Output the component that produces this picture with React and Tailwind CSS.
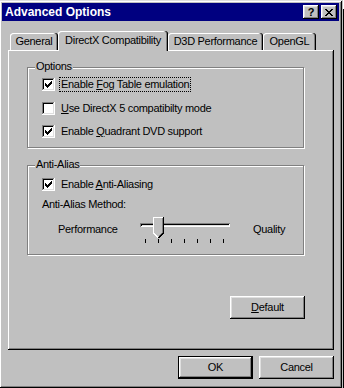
import React from 'react';

const raised = 'bg-[#c0c0c0] shadow-[inset_-1px_-1px_0_#000,inset_1px_1px_0_#fff,inset_-2px_-2px_0_#808080,inset_2px_2px_0_#dfdfdf]';

const Check = () => (
    <svg width="7" height="7" viewBox="0 0 7 7" shapeRendering="crispEdges">
        <rect x="0" y="2" width="1" height="3" fill="#000" />
        <rect x="1" y="3" width="1" height="3" fill="#000" />
        <rect x="2" y="4" width="1" height="3" fill="#000" />
        <rect x="3" y="3" width="1" height="3" fill="#000" />
        <rect x="4" y="2" width="1" height="3" fill="#000" />
        <rect x="5" y="1" width="1" height="3" fill="#000" />
        <rect x="6" y="0" width="1" height="3" fill="#000" />
    </svg>
);

const CheckBox = ({ checked }) => (
    <div className="w-[13px] h-[13px] shrink-0 bg-white flex items-center justify-center shadow-[inset_-1px_-1px_0_#fff,inset_1px_1px_0_#808080,inset_-2px_-2px_0_#dfdfdf,inset_2px_2px_0_#000]">
        {checked && <Check />}
    </div>
);

const CheckRow = ({ checked, focused, children, className = '' }) => (
    <div className={`flex items-center h-[13px] ${className}`}>
        <CheckBox checked={checked} />
        <span className={`ml-[4px] px-[1px] leading-[13px] border border-dotted ${focused ? 'border-black' : 'border-transparent'}`}>
            {children}
        </span>
    </div>
);

const Group = ({ label, className = '', children }) => (
    <div className={`relative w-[277px] border border-[#808080] shadow-[inset_1px_1px_0_#fff,1px_1px_0_#fff] ${className}`}>
        <span className="absolute top-[-8px] left-[7px] px-[1px] bg-[#c0c0c0] leading-[13px]">{label}</span>
        {children}
    </div>
);

const CloseGlyph = () => (
    <svg width="8" height="7" viewBox="0 0 8 7" shapeRendering="crispEdges" fill="#000">
        <rect x="0" y="0" width="2" height="1" />
        <rect x="6" y="0" width="2" height="1" />
        <rect x="1" y="1" width="2" height="1" />
        <rect x="5" y="1" width="2" height="1" />
        <rect x="2" y="2" width="4" height="1" />
        <rect x="3" y="3" width="2" height="1" />
        <rect x="2" y="4" width="4" height="1" />
        <rect x="1" y="5" width="2" height="1" />
        <rect x="5" y="5" width="2" height="1" />
        <rect x="0" y="6" width="2" height="1" />
        <rect x="6" y="6" width="2" height="1" />
    </svg>
);

const Thumb = () => (
    <svg width="11" height="21" viewBox="0 0 11 21" shapeRendering="crispEdges">
        <path d="M0 0H11V16L5.5 21L0 16Z" fill="#c0c0c0" />
        <path d="M0.5 16V0.5H10" stroke="#fff" fill="none" />
        <path d="M0.5 16L5 20.5" stroke="#fff" fill="none" />
        <path d="M10.5 0V16L5.5 21" stroke="#000" fill="none" />
        <path d="M9.5 1V15.5L5.5 19.5" stroke="#808080" fill="none" />
    </svg>
);

const tabs = [
    { name: 'General', w: 'w-[48px]' },
    { name: 'DirectX Compatibility', w: 'w-[110px]', active: true },
    { name: 'D3D Performance', w: 'w-[95px]' },
    { name: 'OpenGL', w: 'w-[53px]' },
];

export default function App() {
    return (
        <div className="w-[344px] h-[388px] bg-[#c0c0c0] flex overflow-hidden text-[11px] tracking-[-0.3px] text-black font-['Liberation_Sans',Arial,sans-serif]">
            {/* dialog window */}
            <div className="ml-[-1px] w-[343px] h-[388px] shrink-0 flex flex-col p-[3px] shadow-[inset_1px_1px_0_#dfdfdf,inset_-1px_-1px_0_#000,inset_2px_2px_0_#fff,inset_-2px_-2px_0_#808080]">
                <div className="h-[18px] bg-[#000080] flex items-center pl-[3px] pr-[2px]">
                    <span className="text-white font-bold text-[12px] tracking-[0px] leading-none">Advanced Options</span>
                    <div className="ml-auto flex gap-[2px]">
                        <div className={`w-[16px] h-[14px] flex items-center justify-center font-bold text-[11px] leading-none text-black ${raised}`}>?</div>
                        <div className={`w-[16px] h-[14px] flex items-center justify-center ${raised}`}>
                            <CloseGlyph />
                        </div>
                    </div>
                </div>

                {/* tabs */}
                <div className="mt-[10px] ml-[8px] h-[19px] flex items-end">
                    {tabs.map((t) => (
                        <div
                            key={t.name}
                            className={`${t.w} flex items-center justify-center bg-[#c0c0c0] rounded-t-[3px] shadow-[inset_-1px_0_0_#000,inset_-2px_0_0_#808080,inset_1px_1px_0_#fff] ${t.active ? 'h-[20px] mb-[-1px] relative z-10 pb-[2px]' : 'h-[17px]'}`}
                        >
                            {t.name}
                        </div>
                    ))}
                </div>

                {/* tab panel */}
                <div className="ml-[6px] w-[326px] h-[300px] flex flex-col pl-[19px] pt-[17px] shadow-[inset_-1px_-1px_0_#000,inset_1px_1px_0_#fff,inset_-2px_-2px_0_#808080]">
                    <Group label="Options" className="h-[81px] pl-[14px] pt-[10px]">
                        <CheckRow checked focused>
                            Enable <u className="underline-offset-1">F</u>og Table emulation
                        </CheckRow>
                        <CheckRow className="mt-[11px]">
                            <u className="underline-offset-1">U</u>se DirectX 5 compatibilty mode
                        </CheckRow>
                        <CheckRow checked className="mt-[10px]">
                            Enable <u className="underline-offset-1">Q</u>uadrant DVD support
                        </CheckRow>
                    </Group>

                    <Group label="Anti-Alias" className="mt-[17px] h-[90px] pl-[14px] pt-[12px]">
                        <CheckRow checked>
                            Enable <u className="underline-offset-1">A</u>nti-Aliasing
                        </CheckRow>
                        <div className="mt-[7px] leading-[13px]">Anti-Alias Method:</div>
                        <div className="mt-[4px] ml-[16px] flex items-center">
                            <span className="w-[82px]">Performance</span>
                            <div className="relative w-[90px] h-[28px] flex flex-col">
                                <div className="mt-[8px] h-[4px] w-full bg-[#dfdfdf] shadow-[inset_1px_1px_0_#808080,inset_-1px_-1px_0_#fff,inset_2px_2px_0_#000]" />
                                <div className="absolute left-[13px] top-[2px] flex">
                                    <Thumb />
                                </div>
                                <div className="mt-[12px] pl-[5px] flex gap-[12px]">
                                    {[0, 1, 2, 3, 4, 5, 6].map((i) => (
                                        <div key={i} className="w-[1px] h-[4px] bg-black" />
                                    ))}
                                </div>
                            </div>
                            <span className="ml-[23px]">Quality</span>
                        </div>
                    </Group>

                    <div className="w-[278px] mt-[41px] flex justify-end">
                        <button className={`w-[75px] h-[23px] flex items-center justify-center ${raised}`}>
                            <u className="underline-offset-1">D</u>efault
                        </button>
                    </div>
                </div>

                {/* dialog buttons */}
                <div className="ml-[6px] w-[326px] mt-[6px] flex justify-end gap-[6px]">
                    <button className="w-[75px] h-[23px] border border-black flex">
                        <span className={`flex-1 flex items-center justify-center ${raised}`}>OK</span>
                    </button>
                    <button className={`w-[75px] h-[23px] flex items-center justify-center ${raised}`}>Cancel</button>
                </div>
            </div>

            {/* edge of window behind */}
            <div className="w-[1px] h-full bg-[#c0c0c0]" />
            <div className="w-[1px] h-full flex flex-col">
                <div className="h-[9px] bg-white" />
                <div className="flex-1 bg-black" />
            </div>
        </div>
    );
}
